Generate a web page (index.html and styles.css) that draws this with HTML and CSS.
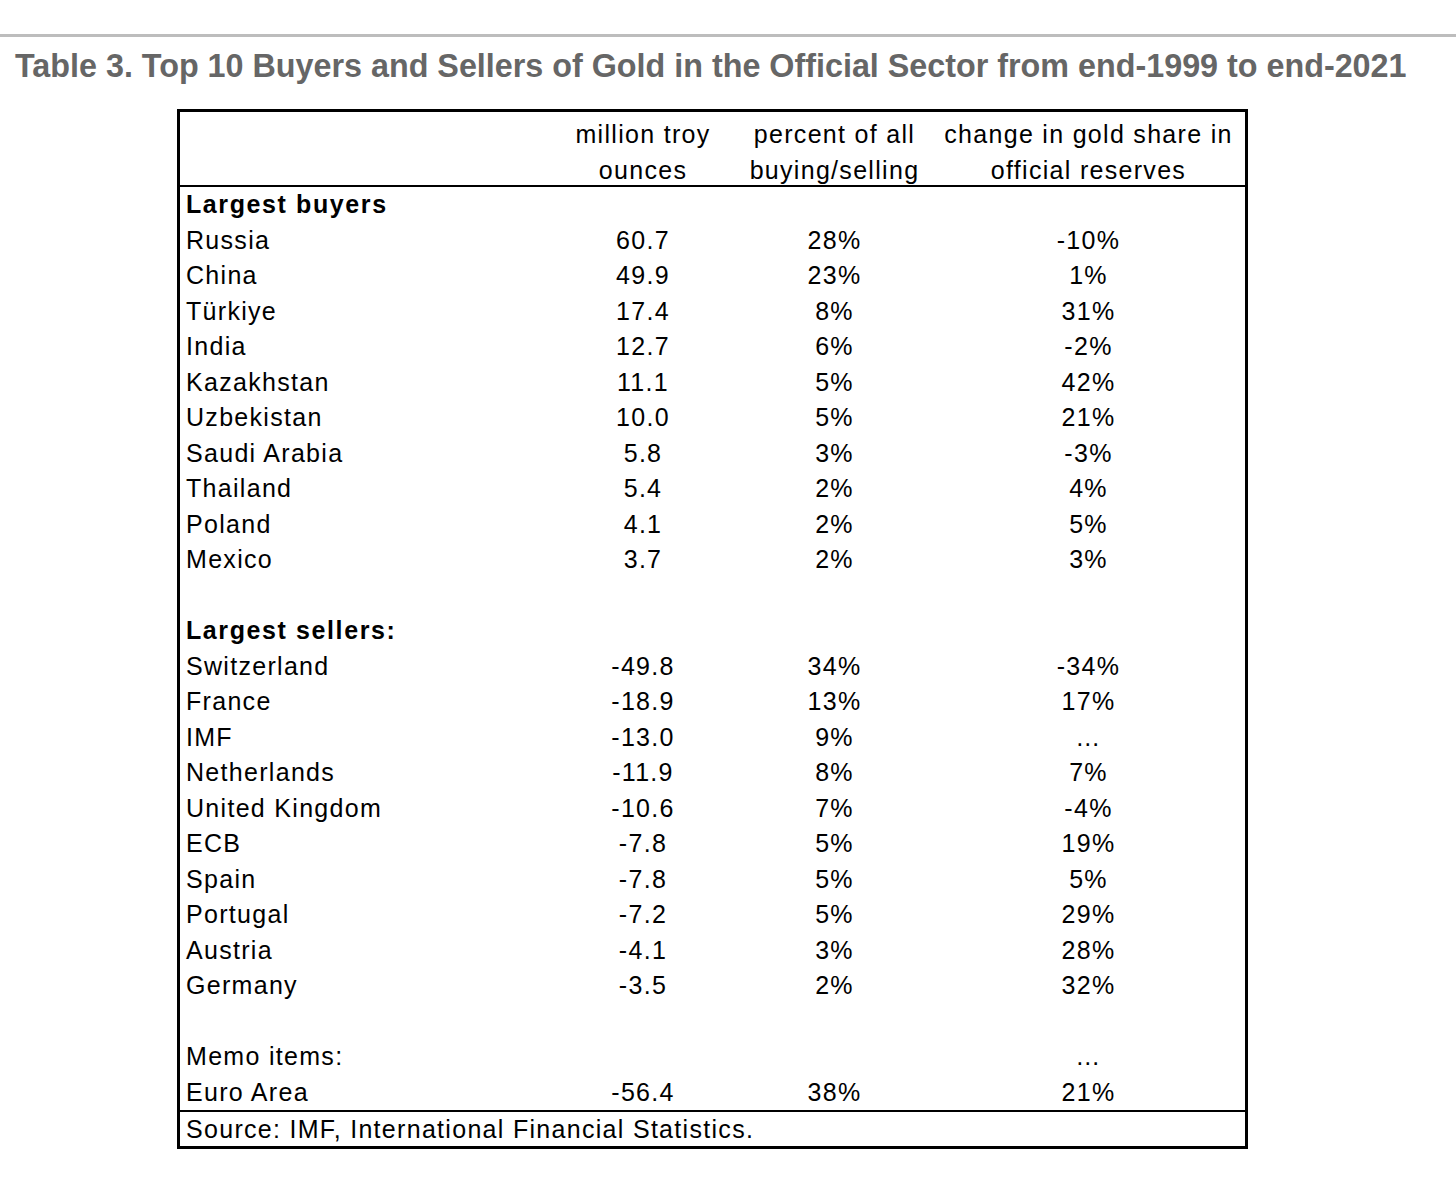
FILE: index.html
```html
<!DOCTYPE html>
<html>
<head>
<meta charset="utf-8">
<link rel="stylesheet" href="styles.css">
</head>
<body>
<div class="rule"></div>
<h1 class="title">Table 3. Top 10 Buyers and Sellers of Gold in the Official Sector from end-1999 to end-2021</h1>
<table class="gold">
  <colgroup>
    <col class="c1"><col class="c2"><col class="c3"><col class="c4">
  </colgroup>
  <thead>
    <tr class="head">
      <th></th>
      <th><div class="hd">million troy<br>ounces</div></th>
      <th><div class="hd">percent of all<br>buying/selling</div></th>
      <th><div class="hd">change in gold share in<br>official reserves</div></th>
    </tr>
  </thead>
  <tbody>
    <tr><td class="lbl bold">Largest buyers</td><td></td><td></td><td></td></tr>
    <tr><td class="lbl">Russia</td><td>60.7</td><td>28%</td><td>-10%</td></tr>
    <tr><td class="lbl">China</td><td>49.9</td><td>23%</td><td>1%</td></tr>
    <tr><td class="lbl">Türkiye</td><td>17.4</td><td>8%</td><td>31%</td></tr>
    <tr><td class="lbl">India</td><td>12.7</td><td>6%</td><td>-2%</td></tr>
    <tr><td class="lbl">Kazakhstan</td><td>11.1</td><td>5%</td><td>42%</td></tr>
    <tr><td class="lbl">Uzbekistan</td><td>10.0</td><td>5%</td><td>21%</td></tr>
    <tr><td class="lbl">Saudi Arabia</td><td>5.8</td><td>3%</td><td>-3%</td></tr>
    <tr><td class="lbl">Thailand</td><td>5.4</td><td>2%</td><td>4%</td></tr>
    <tr><td class="lbl">Poland</td><td>4.1</td><td>2%</td><td>5%</td></tr>
    <tr><td class="lbl">Mexico</td><td>3.7</td><td>2%</td><td>3%</td></tr>
    <tr><td class="lbl"></td><td></td><td></td><td></td></tr>
    <tr><td class="lbl bold">Largest sellers:</td><td></td><td></td><td></td></tr>
    <tr><td class="lbl">Switzerland</td><td>-49.8</td><td>34%</td><td>-34%</td></tr>
    <tr><td class="lbl">France</td><td>-18.9</td><td>13%</td><td>17%</td></tr>
    <tr><td class="lbl">IMF</td><td>-13.0</td><td>9%</td><td>…</td></tr>
    <tr><td class="lbl">Netherlands</td><td>-11.9</td><td>8%</td><td>7%</td></tr>
    <tr><td class="lbl">United Kingdom</td><td>-10.6</td><td>7%</td><td>-4%</td></tr>
    <tr><td class="lbl">ECB</td><td>-7.8</td><td>5%</td><td>19%</td></tr>
    <tr><td class="lbl">Spain</td><td>-7.8</td><td>5%</td><td>5%</td></tr>
    <tr><td class="lbl">Portugal</td><td>-7.2</td><td>5%</td><td>29%</td></tr>
    <tr><td class="lbl">Austria</td><td>-4.1</td><td>3%</td><td>28%</td></tr>
    <tr><td class="lbl">Germany</td><td>-3.5</td><td>2%</td><td>32%</td></tr>
    <tr><td class="lbl"></td><td></td><td></td><td></td></tr>
    <tr><td class="lbl">Memo items:</td><td></td><td></td><td>…</td></tr>
    <tr><td class="lbl">Euro Area</td><td>-56.4</td><td>38%</td><td>21%</td></tr>
  </tbody>
  <tfoot>
    <tr class="src"><td colspan="4" class="lbl">Source: IMF, International Financial Statistics.</td></tr>
  </tfoot>
</table>
</body>
</html>
```
FILE: styles.css
```css
html, body {
  margin: 0;
  padding: 0;
  background: #ffffff;
}
body {
  font-family: "Liberation Sans", Arial, sans-serif;
  color: #000;
}
.rule {
  margin-top: 34px;
  height: 3px;
  background: #bdbdbd;
}
.title {
  margin: 11px 0 0 15px;
  font-size: 32.3px;
  line-height: 36px;
  font-weight: bold;
  color: #666666;
  white-space: nowrap;
}
.gold {
  margin: 25px 0 0 177px;
  width: 1071px;
  box-sizing: border-box;
  border: 3px solid #000;
  border-spacing: 0;
  table-layout: fixed;
  font-size: 25px;
  letter-spacing: 1.3px;
}
.c1 { width: 369px; }
.c2 { width: 188px; }
.c3 { width: 195px; }
.c4 { width: 313px; }
.head th {
  font-weight: normal;
  text-align: center;
  padding: 4px 0 0;
  border-bottom: 2px solid #000;
  vertical-align: top;
  height: 73px;
  box-sizing: border-box;
}
.hd {
  height: 69px;
  line-height: 36px;
  white-space: nowrap;
}
.gold td {
  padding: 0;
  height: 35.5px;
  line-height: 35.5px;
  text-align: center;
  white-space: nowrap;
}
.gold td.lbl {
  text-align: left;
  padding-left: 6px;
}
.gold td.bold {
  font-weight: bold;
  letter-spacing: 1.6px;
}
.src td {
  border-top: 2px solid #000;
  height: 34px;
  line-height: 34px;
}
```
